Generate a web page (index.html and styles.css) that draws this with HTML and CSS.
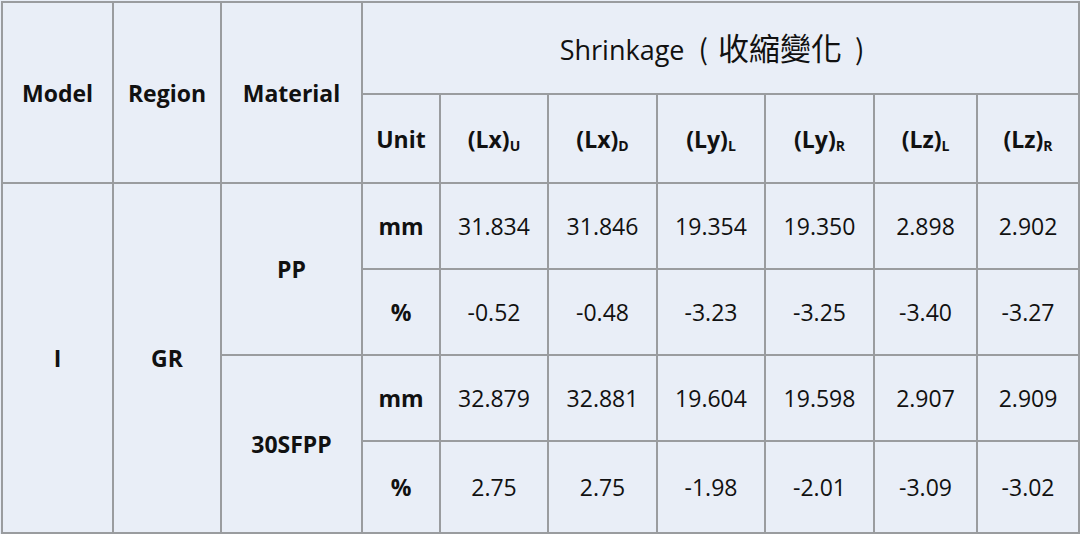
FILE: index.html
```html
<!DOCTYPE html>
<html lang="zh-Hant">
<head>
<meta charset="utf-8">
<title>Shrinkage</title>
<link rel="stylesheet" href="styles.css">
</head>
<body>
<table class="grid">
  <colgroup>
    <col class="c-model"><col class="c-region"><col class="c-mat"><col class="c-unit">
    <col class="c-d1"><col class="c-d2"><col class="c-d3"><col class="c-d4"><col class="c-d5"><col class="c-d6">
  </colgroup>
  <tr class="r-h1">
    <th rowspan="2">Model</th>
    <th rowspan="2">Region</th>
    <th rowspan="2">Material</th>
    <th colspan="7" class="title">Shrinkage<span class="paren open">(</span><span class="zh">收縮變化</span><span class="paren close">)</span></th>
  </tr>
  <tr class="r-h2">
    <th>Unit</th>
    <th>(Lx)<sub>U</sub></th>
    <th>(Lx)<sub>D</sub></th>
    <th>(Ly)<sub>L</sub></th>
    <th>(Ly)<sub>R</sub></th>
    <th>(Lz)<sub>L</sub></th>
    <th>(Lz)<sub>R</sub></th>
  </tr>
  <tr class="r-d">
    <th rowspan="4">I</th>
    <th rowspan="4">GR</th>
    <th rowspan="2">PP</th>
    <th>mm</th>
    <td>31.834</td><td>31.846</td><td>19.354</td><td>19.350</td><td>2.898</td><td>2.902</td>
  </tr>
  <tr class="r-d">
    <th>%</th>
    <td>-0.52</td><td>-0.48</td><td>-3.23</td><td>-3.25</td><td>-3.40</td><td>-3.27</td>
  </tr>
  <tr class="r-d">
    <th rowspan="2">30SFPP</th>
    <th>mm</th>
    <td>32.879</td><td>32.881</td><td>19.604</td><td>19.598</td><td>2.907</td><td>2.909</td>
  </tr>
  <tr class="r-last">
    <th>%</th>
    <td>2.75</td><td>2.75</td><td>-1.98</td><td>-2.01</td><td>-3.09</td><td>-3.02</td>
  </tr>
</table>
</body>
</html>
```

FILE: styles.css
```css
html, body {
  margin: 0;
  padding: 0;
  background: #e9eef7;
}
.grid {
  table-layout: fixed;
  border-collapse: collapse;
  width: 1078px;
  margin: 1px 0 0 1px;
  background: #e9eef7;
  font-family: "Open Sans", "Noto Sans CJK TC", sans-serif;
  color: #111;
}
.grid th, .grid td {
  border: 2px solid #9a9c9f;
  padding: 0;
  text-align: center;
  vertical-align: middle;
  white-space: nowrap;
}
.grid th {
  font-weight: 700;
  font-size: 23px;
}
.grid td {
  font-weight: 400;
  font-size: 23px;
}
.grid th.title {
  font-weight: 400;
  font-size: 27px;
  padding: 0 17px 4px 0;
}
.title .zh {
  font-family: "Noto Sans CJK TC", sans-serif;
  font-size: 31px;
  font-weight: 400;
}
.title .paren {
  font-family: "Noto Sans CJK TC", sans-serif;
  font-weight: 400;
  font-size: 28px;
}
.title .open {
  margin-left: 14px;
  margin-right: 10px;
}
.title .close {
  margin-left: 13px;
}
.grid sub {
  font-size: 14px;
  vertical-align: baseline;
  position: relative;
  top: 3px;
}
.c-model { width: 111px; }
.c-region { width: 108px; }
.c-mat { width: 141px; }
.c-unit { width: 78px; }
.c-d1 { width: 108px; }
.c-d2 { width: 109px; }
.c-d3 { width: 108px; }
.c-d4 { width: 109px; }
.c-d5 { width: 103px; }
.c-d6 { width: 102px; }
.r-h1 { height: 92px; }
.r-h2 { height: 89px; }
.r-d { height: 86px; }
.r-last { height: 92px; }
```
